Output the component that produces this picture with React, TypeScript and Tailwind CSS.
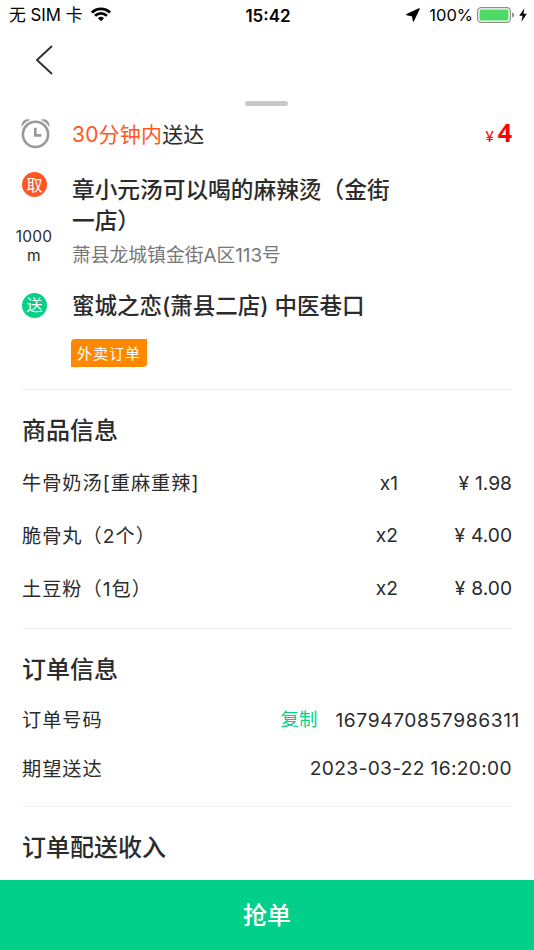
const GOODS = [
  { name: "牛骨奶汤[重麻重辣]", count: "x1", price: "1.98" },
  { name: "脆骨丸（2个）", count: "x2", price: "4.00" },
  { name: "土豆粉（1包）", count: "x2", price: "8.00" },
];

function StatusBar() {
  return (
    <header className="grid h-[30px] grid-cols-3 items-center pr-[7px] pl-[9px] text-black">
      <div className="flex items-center gap-[9px]">
        <span className="text-[16.8px] leading-[30px] whitespace-pre">无 SIM 卡</span>
        <svg className="-mt-px h-[15px] w-5" viewBox="0 0 20 15" aria-hidden="true">
          <g fill="none" stroke="#000" strokeWidth="2.7">
            <path d="M0.9 5.6a12.9 12.9 0 0 1 18.2 0" />
            <path d="M4.1 8.8a8.4 8.4 0 0 1 11.8 0" />
          </g>
          <path d="M10 14.2l-3-3a4.3 4.3 0 0 1 6 0z" />
        </svg>
      </div>
      <span className="pt-[2px] text-center text-[17px] leading-[28px] font-semibold">15:42</span>
      <div className="flex items-center justify-end">
        <svg className="mr-[9px] h-[14px] w-[14px] shrink-0" viewBox="0 0 14 14" aria-hidden="true">
          <path d="M13.2 0.8L7.4 13L6.6 7.9L0.8 6.6z" stroke="#000" strokeWidth="1.2" strokeLinejoin="round" />
        </svg>
        <span className="mr-[4px] text-[16.5px]">100%</span>
        <svg className="mr-[4px] h-4 w-[38px] shrink-0" viewBox="0 0 38 16" aria-hidden="true">
          <rect x="0.6" y="0.6" width="32.8" height="14.8" rx="3.6" fill="none" stroke="#8e8e8e" strokeWidth="1.2" />
          <rect x="2.5" y="2.5" width="29" height="11" rx="1.6" fill="#4cd964" />
          <path d="M35 5.6c1.6.5 2.2 1.4 2.2 2.4S36.6 9.9 35 10.4z" fill="#8e8e8e" />
        </svg>
        <svg className="h-[14px] w-2 shrink-0" viewBox="0 0 8 14" aria-hidden="true">
          <path d="M5.4 0.2L0.2 7.8H3.6L2.4 13.8L7.9 5.8H4.4z" />
        </svg>
      </div>
    </header>
  );
}

function AlarmIcon() {
  return (
    <svg className="h-[30px] w-[30px]" viewBox="0 0 30 30" fill="none" aria-hidden="true">
      <circle cx="14.5" cy="15.4" r="12.6" stroke="#999" strokeWidth="2.6" />
      <path d="M14.3 8.8v7.5h6" stroke="#999" strokeWidth="2.8" />
      <path d="M0.8 8C-0.6 3 4 -1.4 9.6 0.8C5.8 2.2 2.8 4.6 0.8 8z" fill="#999" />
      <path d="M28.2 8C29.6 3 25 -1.4 19.4 0.8C23.2 2.2 26.2 4.6 28.2 8z" fill="#999" />
    </svg>
  );
}

function Divider() {
  return <div className="h-px bg-[#f0f0f0]" />;
}

function SectionTitle({ children }: { children: string }) {
  return <h2 className="h-[34px] text-[24px] leading-[34px] font-medium">{children}</h2>;
}

export default function App() {
  return (
    <div className="flex h-[950px] w-[534px] flex-col overflow-hidden bg-white font-['Inter','Noto_Sans_CJK_SC',sans-serif] text-[#2b2b2b]">
      <StatusBar />
      <nav className="h-[71px] pt-[15px] pl-[35px]">
        <svg className="h-[30px] w-[19px]" viewBox="0 0 19 30" fill="none" aria-hidden="true">
          <path d="M16.5 1.5L2 15L16.5 28.5" stroke="#333" strokeWidth="2" strokeLinecap="round" strokeLinejoin="round" />
        </svg>
      </nav>
      <div className="ml-[245px] h-[5px] w-[43px] rounded-full bg-[#c9c9c9]" />

      <main className="flex-1 px-[22px]">
        <section className="h-[283px] pt-[13px]">
          <div className="-ml-[1px] flex h-[30px] items-center">
            <AlarmIcon />
            <p className="ml-[21px] flex-1 pt-[2px] text-[21px] leading-[30px]">
              <span className="tracking-[0.2px] text-[#ff5722]">30分钟内</span>送达
            </p>
            <p className="flex items-baseline pb-[2px] text-[#ff0000]">
              <span className="mr-[4px] text-[15px]">¥</span>
              <span className="font-['Open_Sans',sans-serif] text-[25px] leading-[30px] font-bold">4</span>
            </p>
          </div>

          <div className="mt-[23px] flex">
            <div className="w-[50px] shrink-0">
              <span className="flex h-[25px] w-[25px] items-center justify-center rounded-full bg-[#ff5722] text-[16px] leading-none text-white">
                取
              </span>
              <p className="mt-[30px] -ml-[7px] w-[38px] text-center text-[15.5px] leading-[19px] tracking-[0.2px]">
                1000 m
              </p>
            </div>
            <div className="pt-[2px]">
              <h1 className="w-[330px] text-[22.7px] leading-[31px] font-medium">
                章小元汤可以喝的麻辣烫（金街<br />一店）
              </h1>
              <p className="mt-[5px] text-[18.8px] leading-[30px] text-[#777]">萧县龙城镇金街A区113号</p>
            </div>
          </div>

          <div className="mt-[17px] flex items-center">
            <span className="mr-[25px] flex h-[25px] w-[25px] items-center justify-center rounded-full bg-[#07cf88] text-[16px] leading-none text-white">
              送
            </span>
            <h1 className="pt-[1px] text-[22.5px] leading-[33px] font-medium">蜜城之恋(萧县二店) 中医巷口</h1>
          </div>
          <div className="mt-[17px] ml-[49px] flex h-[28px] w-[76px] items-center justify-center rounded-tl-[4px] rounded-br-[4px] bg-[#ff8800] pt-[2px] text-[15px] tracking-[1px] text-white">
            外卖订单
          </div>
        </section>
        <Divider />

        <section className="h-[238px] pt-[24px]">
          <SectionTitle>商品信息</SectionTitle>
          <ul className="mt-[9px] text-[19.2px]">
            {GOODS.map((item) => (
              <li key={item.name} className="flex h-[52.6px] items-center">
                <span className="flex-1 pt-px tracking-[1px]">{item.name}</span>
                <span>{item.count}</span>
                <span className="flex w-[114px] justify-end gap-[6px]">
                  <span>¥</span>
                  {item.price}
                </span>
              </li>
            ))}
          </ul>
        </section>
        <Divider />

        <section className="h-[177px] pt-[24px]">
          <SectionTitle>订单信息</SectionTitle>
          <div className="mt-[9px] -mr-[8px] flex h-[48px] items-center text-[19.2px]">
            <span className="flex-1 pt-px tracking-[1px]">订单号码</span>
            <button className="mr-[18px] text-[18.5px] text-[#07cf88]">复制</button>
            <span className="tracking-[0.62px]">1679470857986311</span>
          </div>
          <div className="flex h-[48px] items-center justify-between text-[19.2px]">
            <span className="pt-[2px] tracking-[1px]">期望送达</span>
            <span className="tracking-[0.33px]">2023-03-22 16:20:00</span>
          </div>
        </section>
        <Divider />

        <section className="pt-[24px]">
          <SectionTitle>订单配送收入</SectionTitle>
        </section>
      </main>

      <button className="h-[70px] w-full shrink-0 bg-[#02cf89] pt-[2px] text-[24px] font-medium text-white">抢单</button>
    </div>
  );
}
